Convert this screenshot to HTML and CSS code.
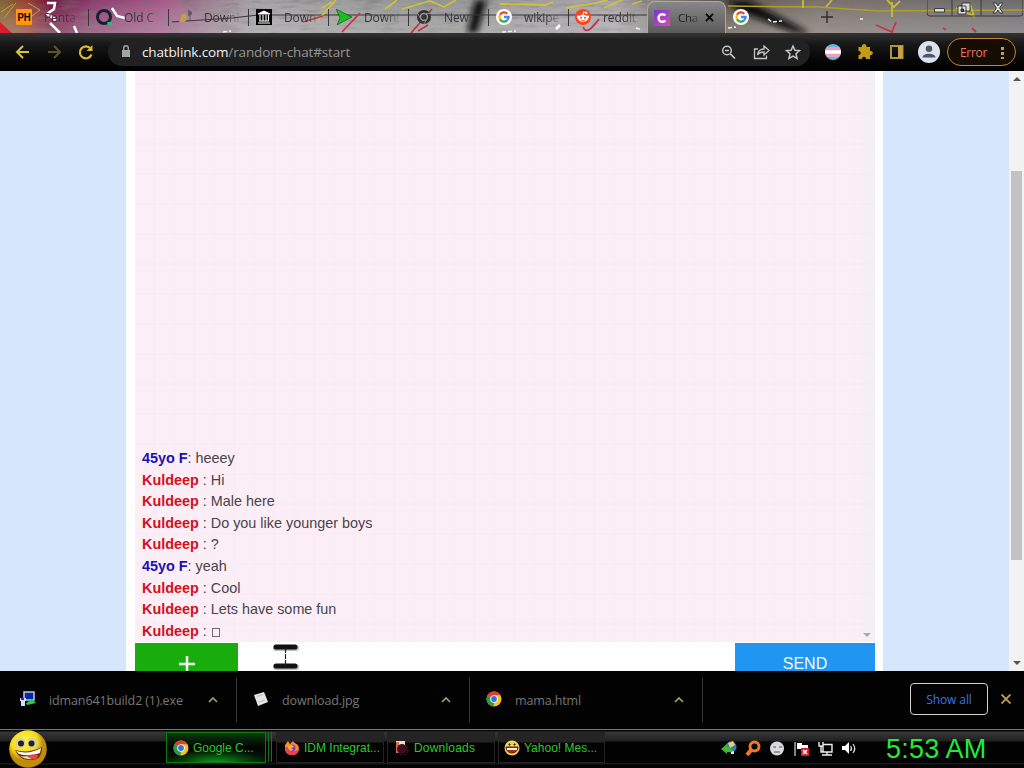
FILE: index.html
```html
<!DOCTYPE html>
<html lang="en">
<head>
<meta charset="utf-8">
<title>Chatblink</title>
<link rel="stylesheet" href="styles.css">
</head>
<body>
<svg width="0" height="0" class="defs">
  <defs>
    <symbol id="google" viewBox="0 0 16 16"><circle cx="8" cy="8" r="8" fill="#fff"/><g fill="none" stroke-width="2.3"><path d="M11.3 4.7A4.6 4.6 0 0 0 4 5.8" stroke="#ea4335"/><path d="M4 5.8a4.6 4.6 0 0 0 0 4.4" stroke="#fbbc05"/><path d="M4 10.2a4.6 4.6 0 0 0 7 1.3" stroke="#34a853"/><path d="M11 11.5A4.6 4.6 0 0 0 12.6 8H8" stroke="#4285f4"/></g></symbol>
    <symbol id="chrome" viewBox="0 0 16 16"><circle cx="8" cy="8" r="7.5" fill="#fbc116"/><path d="M8 8 1.5 4.2A7.5 7.5 0 0 1 14.5 4.3z" fill="#e33b2e"/><path d="M1.5 4.2 8 8 7.6 15.5A7.5 7.5 0 0 1 1.5 4.2" fill="#259b4b"/><path d="M8 4.3h6.5L11 9 8 15.5 8 8z" fill="#fbc116"/><circle cx="8" cy="8" r="3.8" fill="#fff"/><circle cx="8" cy="8" r="2.9" fill="#3273dc"/></symbol>
    <symbol id="up" viewBox="0 0 10 6"><path d="M1 5l4-4 4 4" fill="none" stroke="#a79f65" stroke-width="1.7"/></symbol>
  </defs>
</svg>
<div class="screen">
  <header class="tabs">
    <svg class="art" viewBox="0 0 1024 33" preserveAspectRatio="none">
      <defs>
        <linearGradient id="wall" x1="0" x2="1"><stop offset="0" stop-color="#82632d"/><stop offset=".025" stop-color="#9d4030"/><stop offset=".05" stop-color="#6f1740"/><stop offset=".09" stop-color="#8b3c6c"/><stop offset=".16" stop-color="#a65a8a"/><stop offset=".2" stop-color="#9b7d90"/><stop offset=".25" stop-color="#a4a2a4"/><stop offset=".43" stop-color="#959595"/><stop offset=".6" stop-color="#aaa5aa"/><stop offset=".7" stop-color="#5c5548"/><stop offset=".8" stop-color="#7c716b"/><stop offset="1" stop-color="#6c6a6c"/></linearGradient>
        <linearGradient id="haze" x2="0" y2="1"><stop stop-color="#fff" stop-opacity="0"/><stop offset="1" stop-color="#ddd" stop-opacity=".3"/></linearGradient>
        <filter id="grain" x="0" y="0" width="100%" height="100%"><feTurbulence type="fractalNoise" baseFrequency=".05 .25" numOctaves="3" seed="4"/><feColorMatrix values="0 0 0 0 .15  0 0 0 0 .15  0 0 0 0 .15  1.2 0 0 0 -.55"/></filter>
        <filter id="soft"><feGaussianBlur stdDeviation="3"/></filter>
      </defs>
      <rect width="1024" height="33" fill="url(#wall)"/>
      <rect width="1024" height="33" filter="url(#grain)"/>
      <rect width="1024" height="33" fill="url(#haze)"/>
      <path d="M0 22l12 11H0z" fill="#d91e2e"/>
      <g filter="url(#soft)" fill="#111"><path d="M475 0h12l-10 33h-10zM726 0h22l62 33h-14l-58-22z"/></g>
      <g fill="none">
        <path d="M172 22l60-4 26-3h390" stroke="#3b3639" stroke-width="1.1"/>
        <path d="M728 6l90 1 60 4 146-1" stroke="#aaa02c" stroke-width="1.5"/>
        <path d="M318 20L336 0M322 8l10-6M385 9l12-9M402 9l28-8 14 6 12-7M500 4l45 1 8-3M566 8l30-5 12-3M604 8l18-8M632 4l10-3M803 8V0M832 0l-6 7M892 2v15M887 0l7 7 6-6M956 8l18 8-4-12" stroke="#d2c82c" stroke-width="1.8" opacity=".85"/>
        <path d="M1 12l12-8M4 18L16 3M28 3l12 7-8 6" stroke="#b7a63a"/>
        <path d="M303 22l20-6M342 32l18-19M411 33l21-24M583 27c4 9 11-2 16-8M418 31l10-6M876 25l16 7 4-10M943 28l3 2M972 28l4 4" stroke="#cb304f" stroke-width="1.8"/>
        <path d="M47 3h8l-1 6-7 5 8 5-1 2M50 23l10 10M112 8l5 8 8 2M74 26l3 7M560 25l-4 4" stroke="#fff" stroke-width="2.5"/>
        <path d="M768 19l4 3 10-1M860 19h3M728 28l8-1M502 32l14-1M636 28l6 2M223 32l8-1" stroke="#eee" stroke-width="1.5" stroke-dasharray="4 2"/>
      </g>
    </svg>
    <div class="tabrow">
      <div class="tab"><svg viewBox="0 0 16 16"><rect width="16" height="16" rx="1" fill="#ff9712"/><text x="8" y="12" text-anchor="middle" textLength="13" lengthAdjust="spacingAndGlyphs" class="ph">PH</text></svg><span class="dim">Penta</span></div>
      <div class="tab"><svg viewBox="0 0 16 16"><circle cx="8" cy="8" r="6.5" fill="none" stroke="#172133" stroke-width="3"/><path d="M11 13h5v3h-4z" fill="#35b879"/></svg><span>Old C</span></div>
      <div class="tab"><svg viewBox="0 0 16 16"><path d="M3 13c3-3 0-7 4-8s5 4 2 8z" fill="#bba04d"/><path d="M12 1l5 3-4 3zM14 2v9" fill="#555" stroke="#655f65"/></svg><span>Downl</span></div>
      <div class="tab"><svg viewBox="0 0 16 16"><path d="M0 0h16v16H0z"/><path d="M2 5l6-3 6 3zM3 12h10M2 14h12M4 6v6M7 6v6M10 6v6M12.5 6v6" stroke="#fff" stroke-width="1.1" fill="#fff"/></svg><span>Down</span></div>
      <div class="tab"><svg viewBox="0 0 16 16"><path d="M0 0l16 8L1 16l3-7z" fill="#17bf20" stroke="#08310b" stroke-width=".5"/></svg><span>Downl</span></div>
      <div class="tab"><svg viewBox="0 0 16 16"><circle cx="8" cy="8" r="7" fill="#333133"/><circle cx="8" cy="8" r="3.5" fill="#333" stroke="#999" stroke-width="1.4"/><path d="M8 4.5h7M5 10L2 5M11 10l-3 5" stroke="#888"/></svg><span>New</span></div>
      <div class="tab"><svg><use href="#google"/></svg><span>wikipe</span></div>
      <div class="tab last"><svg viewBox="0 0 16 16"><circle cx="8" cy="8" r="8" fill="#ff4519"/><ellipse cx="8" cy="9.3" rx="5" ry="3.5" fill="#fff"/><circle cx="3.3" cy="8" r="1.4" fill="#fff"/><circle cx="12.7" cy="8" r="1.4" fill="#fff"/><circle cx="11.3" cy="3.8" r="1.1" fill="#fff"/><path d="M8 6l.7-3 2.5.7" fill="none" stroke="#fff"/><path d="M6 11q2 1.2 4 0" fill="none" stroke="#ff4519" stroke-width=".8"/><circle cx="6" cy="8.7" r="1" fill="#ff4519"/><circle cx="10" cy="8.7" r="1" fill="#ff4519"/></svg><span>reddit</span></div>
      <div class="tab active"><svg viewBox="0 0 16 16"><defs><linearGradient id="pink" x2="1" y2="1"><stop stop-color="#713ad0"/><stop offset="1" stop-color="#e04ab1"/></linearGradient></defs><path d="M0 0h16v16H0z" fill="url(#pink)"/><path d="M11.3 5.6a3.8 3.8 0 1 0 0 4.8" fill="none" stroke="#fff" stroke-width="2.4"/></svg><span>Cha</span><svg class="x" viewBox="0 0 10 10"><path d="M1 1l8 8M9 1L1 9" stroke="#050505" stroke-width="2"/></svg></div>
      <div class="tab end"><svg><use href="#google"/></svg></div>
      <svg class="plus" viewBox="0 0 12 12"><path d="M6 0v12M0 6h12" stroke="#322d30" stroke-width="1.4"/></svg>
      <svg class="winbtns" viewBox="0 0 96 18"><path d="M0 0v13q0 3 3 3h90q3 0 3-3V0M25 0v16M54 0v16" fill="none" stroke="#393839"/><g fill="#ddd" stroke="#222" stroke-width=".8"><path d="M7.500 8.500h10v3.500h-10z"/><path d="M35 3h8v8h-8zM31 6h8v8h-8z"/><path d="M34 9h2.500v2.500H34z" fill="#444"/><path d="M66 3h3l2 3 2-3h3l-3.500 5L76 13h-3l-2-3-2 3h-3l3.500-5z"/></g></svg>
    </div>
  </header>

  <nav class="toolbar">
    <svg class="nav" viewBox="0 0 98 20"><g fill="none" stroke-width="2"><path d="M15 10H3M9 4l-6 6 6 6" stroke="#d6c63a"/><path d="M34 10h12M40 4l6 6-6 6" stroke="#58572d"/><path d="M76.5 6.5a6 6 0 1 0 1 6" stroke="#d9b936" stroke-width="2.2"/><path d="M78.5 3v6h-6z" fill="#d9b936" stroke="none"/></g></svg>
    <div class="omnibox">
      <svg class="lock" viewBox="0 0 10 13"><path d="M1 5h8v7H1z" fill="#a5a5a5"/><path d="M2.7 5V3a2.3 2.3 0 0 1 4.6 0v2" fill="none" stroke="#a5a5a5" stroke-width="1.4"/></svg>
      <div class="url">chatblink.com<span>/random-chat#start</span></div>
      <svg class="boxicons" viewBox="0 0 80 18"><g fill="none" stroke="#c5c5c5" stroke-width="1.5"><circle cx="6" cy="7.5" r="4.3"/><path d="M9.3 10.8L14 15.500M4 7.500h4" stroke-width="1.7"/><path d="M37 6h-3.500v9.500h12v-3M36.500 12c.5-4 3-6 6.500-6V3l5 4.500-5 4.500V9c-3 0-5 .7-6.500 3z" stroke-width="1.3"/><path d="M72 3l1.900 4.300 4.600.4-3.500 3.100 1.100 4.600-4.100-2.400-4.100 2.400L69 10.800l-3.500-3.100 4.600-.4z"/></g></svg>
    </div>
    <svg class="exts" viewBox="0 0 120 24"><defs><clipPath id="round"><circle cx="10" cy="12" r="8"/></clipPath></defs><g clip-path="url(#round)"><path fill="#67b7dd" d="M0 2h20v20H0z"/><path fill="#e7a4b8" d="M0 7h20v10H0z"/><path fill="#fff" d="M0 10.3h20v3.5H0z"/></g><path d="M35.500 7h3.500a2.300 2.300 0 1 1 4.300 0H47v4a2.200 2.200 0 1 1 0 4.200V19h-4c0-3-4-3-4 0h-3.500v-4c3 0 3-4 0-4V7z" fill="#c39b17"/><path d="M68 6h11.500v12H68z" fill="none" stroke="#b1923a" stroke-width="2"/><path d="M75 6h4.500v12H75z" fill="#c6a445"/><circle cx="106" cy="12" r="11" fill="#dde2ef"/><circle cx="106" cy="8.800" r="3.300" fill="#4e5763"/><path d="M99.500 17.500c0-5 13-5 13 0z" fill="#4e5763"/></svg>
    <div class="error">Error<i></i></div>
  </nav>

  <main class="page">
    <div class="sheet">
      <div class="chat">
        <p><b class="f">45yo F</b>: heeey</p>
        <p><b>Kuldeep</b> : Hi</p>
        <p><b>Kuldeep</b> : Male here</p>
        <p><b>Kuldeep</b> : Do you like younger boys</p>
        <p><b>Kuldeep</b> : ?</p>
        <p><b class="f">45yo F</b>: yeah</p>
        <p><b>Kuldeep</b> : Cool</p>
        <p><b>Kuldeep</b> : Lets have some fun</p>
        <p><b>Kuldeep</b> : <i class="missing"></i></p>
        <span class="down inner"></span>
      </div>
      <div class="compose">
        <div class="add"><svg viewBox="0 0 16 16"><path d="M8 0v16M0 8h16" stroke="#f2fff0" stroke-width="2.5"/></svg></div>
        <div class="input"><svg class="cursor" viewBox="0 0 28 28"><path d="M4 5h20M4 24h20" stroke="#bbb" stroke-width="6" stroke-linecap="round"/><path d="M4 4h19M4 23h19" stroke="#111" stroke-width="5" stroke-linecap="round"/><path d="M13.500 5v17" stroke="#222" stroke-width="1.2" stroke-dasharray="5 1"/></svg></div>
        <div class="send">SEND</div>
      </div>
    </div>
    <div class="scroll"><span class="uparrow"></span><div class="thumb"></div><span class="down"></span></div>
  </main>

  <section class="downloads">
    <div class="item"><svg viewBox="0 0 16 16"><path d="M4 1h10v8H4z" fill="#0924a8" stroke="#b8cbe1" stroke-width="1.5"/><path d="M0 7h6v3H0zM1 10h4v5H1z" fill="#d7deef"/><path d="M1 7h3v2H1z" fill="#1832c0"/><path d="M6 12l6-4 4 4-4 1-5 1z" fill="#25c94b"/></svg><span>idman641build2 (1).exe</span><svg class="chev"><use href="#up"/></svg></div>
    <div class="item"><svg viewBox="0 0 16 16"><path d="M1 4l10-3 4 10-10 4z" fill="#e6e6e6"/><path d="M4 5.500l6-2M6 11l6-2" stroke="#bbb"/></svg><span>download.jpg</span><svg class="chev"><use href="#up"/></svg></div>
    <div class="item"><svg><use href="#chrome"/></svg><span>mama.html</span><svg class="chev"><use href="#up"/></svg></div>
    <div class="showall">Show all</div>
    <svg class="close" viewBox="0 0 10 10"><path d="M.5.5l9 9M9.5.5l-9 9" stroke="#c3a348" stroke-width="1.8"/></svg>
  </section>

  <footer class="taskbar">
    <svg class="smile" viewBox="0 0 38 38"><defs><radialGradient id="sun" cx=".4" cy=".3"><stop stop-color="#fff64c"/><stop offset=".7" stop-color="#f4d91e"/><stop offset="1" stop-color="#c18d09"/></radialGradient></defs><circle cx="19" cy="19" r="18.800" fill="url(#sun)"/><circle cx="11.500" cy="13" r="5" fill="#d8d09a"/><circle cx="23.500" cy="13" r="5" fill="#d8d09a"/><circle cx="12" cy="13.500" r="3" fill="#222"/><circle cx="22.500" cy="13.500" r="3" fill="#222"/><path d="M6 20q13 4 27-3c0 8-4 14-10 13-7 0-13-1-17-10z" fill="#6b2a09"/><path d="M7 21q13 4 25-3l-1 5q-11 4-21 1z" fill="#fff"/><path d="M11 26q8 1 16-1c0 6-10 5-16 1z" fill="#e9d9b0"/><path d="M18 26q7-3 11-1-1 9-11 1" fill="#e5483c"/></svg>
    <div class="tasks">
      <div class="task current"><svg><use href="#chrome"/></svg><span>Google C...</span></div>
      <div class="stack"></div>
      <div class="task idm"><svg viewBox="0 0 16 16"><path d="M1 5l3-4 2 3 3-3c1 3 6 2 6 8a7.200 7.200 0 0 1-14 1z" fill="#ff8c22"/><path d="M1 8c0 9 14 10 14 0-2 5-11 4-11-2z" fill="#f33b55"/><circle cx="8" cy="8" r="3.500" fill="#863ccc"/><path d="M3 6l5-1 2 2-3 1 2 2-3 1z" fill="#ffb530"/></svg><span>IDM Integrat...</span></div>
      <div class="task dl"><svg viewBox="0 0 16 16"><path d="M2 1h9v12H2z" fill="#f0dccb"/><path d="M2 2h3v11H2z" fill="#cd7150"/><circle cx="8" cy="9" r="5" fill="#3c0d19"/><circle cx="9" cy="10" r="5" fill="none" stroke="#743b48" stroke-dasharray="1 1.500"/></svg><span>Downloads</span></div>
      <div class="task ym"><svg viewBox="0 0 16 16"><circle cx="8" cy="8" r="7.500" fill="#f7d654"/><path d="M2 7h12c0 8-12 8-12 0z" fill="#b32916" stroke="#61200f"/><path d="M3 8h10v2H3z" fill="#fff"/><circle cx="5.500" cy="4.500" r="1"/><circle cx="10.500" cy="4.500" r="1"/></svg><span>Yahoo! Mes...</span></div>
    </div>
    <svg class="tray" viewBox="0 0 140 18"><circle cx="10" cy="7" r="5.500" fill="#3979ba"/><path d="M7 3l5-2 2 4-5 3z" fill="#dfd470"/><path d="M0 9l6-5v3h3l4 5H6v2z" fill="#42b836"/><path d="M10 12l3-1v3h-3z" fill="#e6e6e6"/><circle cx="33.500" cy="6.500" r="4.500" fill="none" stroke="#f4781f" stroke-width="3"/><path d="M30 10l-4 5" stroke="#f4781f" stroke-width="4"/><circle cx="56" cy="8.500" r="7" fill="#d8dbdd"/><path d="M52 7h3M58 7h3M53 12h6" stroke="#555"/><path d="M74 2v14" stroke="#fff"/><path d="M76 3h5v2h6v5h-4V9h-7z" fill="#fff"/><path d="M80 8h8v8h-8z" fill="#d61b29"/><path d="M82 10l4 4M86 10l-4 4" stroke="#fff" stroke-width="1.500"/><path d="M102 4.500h9v7.500h-9zM106 12v3M101 15h10M98 2v4h4V2M100 6v6h2" fill="none" stroke="#eee" stroke-width="1.400"/><path d="M121 6h3l4-4v12l-4-4h-3z" fill="#fff"/><path d="M129.500 6q2 2.500 0 5M132 4q3.500 4.500 0 9" fill="none" stroke="#ddd" stroke-width="1.200"/></svg>
    <time>5:53 AM</time>
  </footer>
</div>
</body>
</html>
```

FILE: styles.css
```css
* { box-sizing: border-box; }
body { margin: 0; width: 1024px; height: 768px; overflow: hidden; background: #000; font-family: "Open Sans", "Noto Sans", sans-serif; }
.defs { position: absolute; }
svg { flex: none; display: block; }
.screen { display: flex; flex-direction: column; width: 1024px; height: 768px; }
.tabs { height: 33px; position: relative; flex: none; }
.art { position: absolute; inset: 0; width: 1024px; height: 33px; }
.tabrow { position: relative; display: flex; padding-left: 8px; height: 33px; }
.tab { width: 80px; height: 33px; padding: 1px 0 0 8px; display: flex; align-items: center; gap: 12px; font-size: 12px; letter-spacing: -.1px; color: #38343a; flex: none; }
.tab + .tab { background: linear-gradient(#3b363b, #3b363b) 0 9px / 1px 17px no-repeat; }
.tab > svg { width: 16px; height: 16px; }
.tab span { width: 38px; white-space: nowrap; -webkit-mask-image: linear-gradient(90deg, #000 55%, transparent); mask-image: linear-gradient(90deg, #000 55%, transparent); }
.tab .dim { color: #542640; }
.tab.last { width: 79px; padding-left: 7px; }
.tab + .tab.active { width: 79px; padding: 0 0 0 6px; margin-top: 1px; height: 32px; border-radius: 8px 8px 0 0; background: linear-gradient(#878787, #5b5b5b); gap: 8px; color: #222; border: 1px solid #aaa; border-bottom: 0; }
.tab.active span { width: 23px; letter-spacing: -.3px; font-size: 11.5px; }
.tab.active .x { width: 9px; height: 9px; margin-left: -4px; }
.tab + .tab.end { background: none; padding-left: 7px; width: 80px; }
.plus { width: 12px; height: 12px; margin: 11px 0 0 15px; }
.winbtns { width: 96px; height: 18px; margin-left: 94px; }
.ph { font: bold 11px "Liberation Sans", sans-serif; }
.toolbar { height: 38px; flex: none; display: flex; align-items: center; background: linear-gradient(#333 0, #171717 30%, #050506 75%, #000); padding-left: 14px; }
.nav { width: 98px; height: 20px; margin-right: -4px; }
.omnibox { display: flex; align-items: center; width: 702px; height: 28px; border-radius: 14px; background: #202120; padding: 0 9px 0 13px; }
.lock { width: 10px; height: 13px; margin: -1px 11px 0 0; }
.url { color: #f0f0f0; font-size: 13.5px; letter-spacing: -.14px; flex: 1; }
.url span { color: #969696; }
.boxicons { width: 80px; height: 18px; }
.exts { width: 120px; height: 24px; margin-left: 13px; }
.error { margin-left: 4px; width: 69px; height: 28px; border: 1px solid #c4852d; border-radius: 14px; color: #ed785b; background: #150d04; display: flex; align-items: center; font-size: 12px; letter-spacing: -.3px; padding-left: 12px; }
.error i { width: 3px; height: 13px; margin-left: auto; margin-right: 11px; background: radial-gradient(circle, #c59b57 1.5px, transparent 1.7px) 0 0 / 3px 5px; }
.page { height: 600px; flex: none; display: flex; background: #d6e7fd; overflow: hidden; }
.sheet { margin-left: 126px; width: 757px; height: 600px; padding: 0 8px 0 9px; background: #fff; display: flex; flex-direction: column; }
.chat { height: 571px; flex: none; background: repeating-linear-gradient(0deg, transparent 0 17px, rgba(235,215,228,.12) 17px 19px, transparent 19px 30px), repeating-linear-gradient(90deg, transparent 0 19px, rgba(235,215,230,.18) 19px 20px), linear-gradient(90deg, #fceef6 0 723px, #f3f0f3 731px); display: flex; flex-direction: column; justify-content: flex-end; padding: 0 0 0 7px; position: relative; font: 14.4px/21.6px "Liberation Sans", Arial, sans-serif; color: #49434b; }
.chat p { margin: 0; height: 21.6px; white-space: pre; position: relative; top: .4px; }
.chat b { color: #d3101f; }
.chat b.f { color: #2110b3; }
.missing { display: inline-block; width: 8px; height: 9px; border: 1px solid #716a72; margin-left: 1px; vertical-align: -1px; }
.down { display: block; width: 8px; border: 4px solid transparent; border-top-color: #555; border-bottom: 0; }
.inner { position: absolute; right: 4px; bottom: 5px; border-top-color: #aaa; }
.compose { height: 28px; margin-top: 1px; display: flex; overflow: hidden; }
.add { width: 103px; height: 42px; background: #18ad0c; display: flex; justify-content: center; padding-top: 13px; }
.add svg { width: 16px; height: 16px; }
.input { width: 497px; padding: 0 0 0 34px; background: #fff; }
.cursor { width: 28px; height: 28px; }
.send { width: 140px; height: 42px; background: #2095f2; color: #f2f9ff; text-align: center; font: 16px/42px "Liberation Sans", Arial, sans-serif; }
.scroll { width: 15px; margin-left: auto; background: #f3f2f2; display: flex; flex-direction: column; align-items: center; }
.uparrow { margin-top: 6px; border: 4px solid transparent; border-bottom-color: #555; border-top: 0; }
.thumb { margin-top: 90px; width: 11px; height: 389px; background: #c2c2c2; }
.scroll .down { margin-top: 101px; }
.downloads { height: 58px; flex: none; display: flex; align-items: center; background: #020202; border-top: 1px solid #000; }
.item { width: 233px; height: 44px; border-right: 1px solid #393939; display: flex; align-items: center; padding: 0 18px 0 16px; margin-top: -1px; color: #777; font-size: 12.5px; }
.item:first-child { width: 237px; padding-left: 20px; }
.item > svg { width: 16px; height: 16px; margin: -3px 13px 0 0; }
.item span { white-space: nowrap; letter-spacing: -.12px; padding-top: 1px; }
.item .chev { width: 10px; height: 6px; margin: 0 0 0 auto; }
.showall { width: 78px; height: 32px; margin: -3px 13px 0 207px; border: 1px solid #d2d2d2; border-radius: 4px; color: #3d73e5; display: flex; justify-content: center; align-items: center; font-size: 12px; letter-spacing: -.1px; white-space: nowrap; }
.close { width: 10px; height: 10px; margin-top: -3px; }
.taskbar { height: 39px; flex: none; display: flex; border-top: 1px solid #777; background: linear-gradient(#080808 0 1px, #373737 2px, #202020 11px, #020202 12px 33px, #1a1a1a 33px 34px, #020202 35px); }
.smile { width: 38px; height: 38px; margin: 0 0 0 9px; }
.tasks { display: flex; margin: 2px 0 0 119px; width: 439px; height: 32px; }
.task { width: 107px; height: 31px; display: flex; align-items: center; gap: 4px; padding-left: 7px; border: 1px solid #242424; background: linear-gradient(#242424 0 9px, #030303 10px); color: #29c92f; font: 12px/15px "Liberation Sans", Arial, sans-serif; white-space: nowrap; margin-right: 3px; flex: none; }
.task > svg { width: 16px; height: 16px; }
.task span { padding-top: 1px; }
.task.current { width: 100px; padding-left: 6px; border-color: #0d7a15; background: radial-gradient(ellipse at 50% 100%, #12a81b 0, #063e09 50%, transparent 75%) 0 17px / 100% 14px no-repeat, linear-gradient(#08390c, #010401 50%, #031c05); margin-right: 2px; }
.stack { width: 5px; border: 1px solid #087a11; border-width: 0 1px; margin-right: 4px; height: 30px; }
.task.idm { width: 108px; padding-left: 7px; }
.task.dl { width: 108px; padding-left: 6px; letter-spacing: .2px; }
.task.ym { margin: 0; padding-left: 5px; }
.tray { width: 140px; height: 18px; margin: 10px 0 0 116px; }
time { color: #20ec35; font: 27px/38px "Liberation Sans", Arial, sans-serif; margin-left: 25px; letter-spacing: .2px; white-space: nowrap; }
```
